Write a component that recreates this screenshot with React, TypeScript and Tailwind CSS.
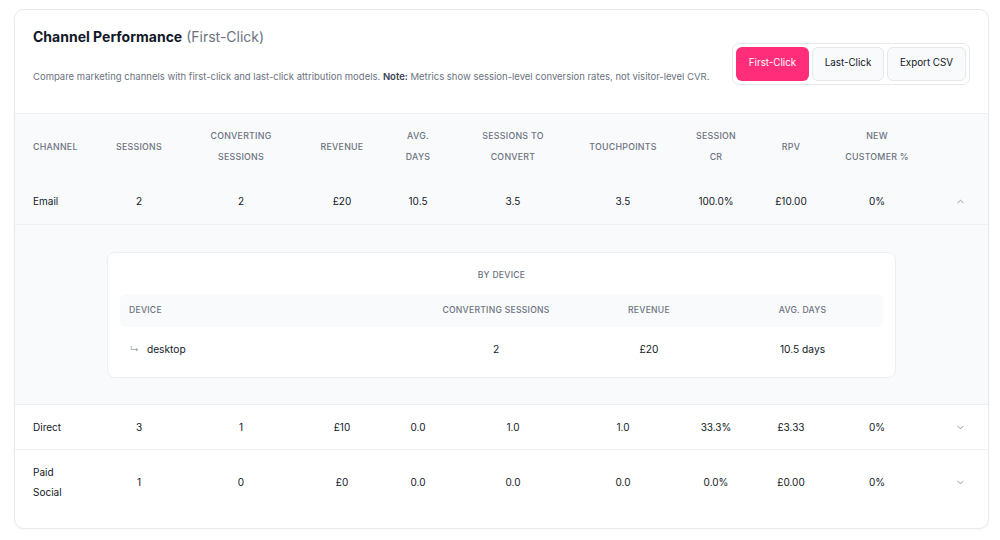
import { ChevronDown, ChevronUp } from "lucide-react";

type Row = {
  channel: string;
  sessions: string;
  converting: string;
  revenue: string;
  avgDays: string;
  toConvert: string;
  touchpoints: string;
  cr: string;
  rpv: string;
  newCustomer: string;
  expanded?: boolean;
};

const rows: Row[] = [
  {
    channel: "Email",
    sessions: "2",
    converting: "2",
    revenue: "£20",
    avgDays: "10.5",
    toConvert: "3.5",
    touchpoints: "3.5",
    cr: "100.0%",
    rpv: "£10.00",
    newCustomer: "0%",
    expanded: true,
  },
  {
    channel: "Direct",
    sessions: "3",
    converting: "1",
    revenue: "£10",
    avgDays: "0.0",
    toConvert: "1.0",
    touchpoints: "1.0",
    cr: "33.3%",
    rpv: "£3.33",
    newCustomer: "0%",
  },
  {
    channel: "Paid Social",
    sessions: "1",
    converting: "0",
    revenue: "£0",
    avgDays: "0.0",
    toConvert: "0.0",
    touchpoints: "0.0",
    cr: "0.0%",
    rpv: "£0.00",
    newCustomer: "0%",
  },
];

const cols = "grid grid-cols-[85px_78px_126px_76px_76px_114px_106px_80px_70px_102px_60px]";

function HeaderCell({ lines, left }: { lines: string[]; left?: boolean }) {
  return (
    <div className={`flex flex-col justify-center ${left ? "items-start pl-[18px]" : "items-center text-center"}`}>
      {lines.map((l) => (
        <span key={l}>{l}</span>
      ))}
    </div>
  );
}

function DeviceBreakdown() {
  return (
    <div className="bg-[#f9fafb] border-b border-[#eef0f3] px-[92px] pt-[27px] pb-[26px]">
      <div className="bg-white border border-[#eceef1] rounded-[8px] px-[12px] pt-[13px] pb-[4px]">
        <div className="text-center text-[8.6px] leading-[18px] font-medium tracking-[0.03em] text-[#6b7280]">BY DEVICE</div>
        <div className="mt-[10px] grid grid-cols-[296px_160px_146px_1fr] bg-[#f9fafb] rounded-[6px] h-[33px] items-center text-[8.6px] font-medium tracking-[0.03em] text-[#6b7280]">
          <span className="pl-[9px]">DEVICE</span>
          <span className="text-center">CONVERTING SESSIONS</span>
          <span className="text-center">REVENUE</span>
          <span className="text-center">AVG. DAYS</span>
        </div>
        <div className="grid grid-cols-[296px_160px_146px_1fr] h-[46px] items-center text-[10.2px] text-[#111827]">
          <span className="pl-[10px] flex items-center gap-[8px]">
            <span className="text-[#9ca3af] text-[9px]">↳</span>
            <span>desktop</span>
          </span>
          <span className="text-center">2</span>
          <span className="text-center">£20</span>
          <span className="text-center">10.5 days</span>
        </div>
      </div>
    </div>
  );
}

export default function App() {
  return (
    <div className="min-h-[540px] bg-white pt-[9px] px-[14px] font-['Inter',sans-serif]">
      <div className="w-[975px] border border-[#e8eaed] rounded-[10px] bg-white shadow-[0_1px_2px_rgba(0,0,0,0.04)] overflow-hidden pb-[14px]">
        <div className="h-[104px] flex items-center justify-between pl-[18px] pr-[18px] border-b border-[#eef0f3]">
          <div className="flex flex-col pb-[14px]">
            <h1 className="text-[14px] leading-[24px] text-[#111827]">
              <span className="font-bold">Channel Performance</span>{" "}
              <span className="font-normal text-[#6b7280]">(First-Click)</span>
            </h1>
            <p className="mt-[20px] text-[9.5px] leading-[16px] text-[#6b7280] whitespace-nowrap">
              Compare marketing channels with first-click and last-click attribution models.{" "}
              <span className="font-semibold text-[#374151]">Note:</span> Metrics show session-level conversion rates, not
              visitor-level CVR.
            </p>
          </div>
          <div className="mt-[4px] flex gap-[3px] p-[3px] border border-[#e5e7eb] rounded-[7px] bg-white">
            <button className="h-[34px] w-[73px] rounded-[6px] bg-[#ff2d7a] text-white text-[9.8px] whitespace-nowrap">
              First-Click
            </button>
            <button className="h-[34px] w-[72px] rounded-[6px] bg-[#f9fafb] border border-[#e5e7eb] text-[#111827] text-[9.8px] whitespace-nowrap">
              Last-Click
            </button>
            <button className="h-[34px] w-[79px] rounded-[6px] bg-[#f9fafb] border border-[#e5e7eb] text-[#111827] text-[9.8px] whitespace-nowrap">
              Export CSV
            </button>
          </div>
        </div>

        <div className={`${cols} bg-[#f9fafb] py-[11px] text-[8.8px] leading-[21px] font-medium tracking-[0.03em] text-[#6b7280]`}>
          <HeaderCell lines={["CHANNEL"]} left />
          <HeaderCell lines={["SESSIONS"]} />
          <HeaderCell lines={["CONVERTING", "SESSIONS"]} />
          <HeaderCell lines={["REVENUE"]} />
          <HeaderCell lines={["AVG.", "DAYS"]} />
          <HeaderCell lines={["SESSIONS TO", "CONVERT"]} />
          <HeaderCell lines={["TOUCHPOINTS"]} />
          <HeaderCell lines={["SESSION", "CR"]} />
          <HeaderCell lines={["RPV"]} />
          <HeaderCell lines={["NEW", "CUSTOMER %"]} />
          <div />
        </div>

        {rows.map((r, i) => (
          <div key={r.channel}>
            <div
              className={`${cols} items-center text-[10px] leading-[20px] text-[#111827] ${
                r.expanded ? "bg-[#f9fafb] py-[13px]" : "bg-white py-[12px]"
              } ${i < rows.length - 1 ? "border-b border-[#eef0f3]" : ""}`}
            >
              <div className="pl-[18px] pr-[18px]">{r.channel}</div>
              <div className="text-center">{r.sessions}</div>
              <div className="text-center">{r.converting}</div>
              <div className="text-center">{r.revenue}</div>
              <div className="text-center">{r.avgDays}</div>
              <div className="text-center">{r.toConvert}</div>
              <div className="text-center">{r.touchpoints}</div>
              <div className="text-center">{r.cr}</div>
              <div className="text-center">{r.rpv}</div>
              <div className="text-center">{r.newCustomer}</div>
              <div className="flex justify-center pl-[4px] text-[#6b7280]">
                {r.expanded ? <ChevronUp size={11} strokeWidth={1.5} /> : <ChevronDown size={11} strokeWidth={1.5} />}
              </div>
            </div>
            {r.expanded ? <DeviceBreakdown /> : null}
          </div>
        ))}
      </div>
    </div>
  );
}
